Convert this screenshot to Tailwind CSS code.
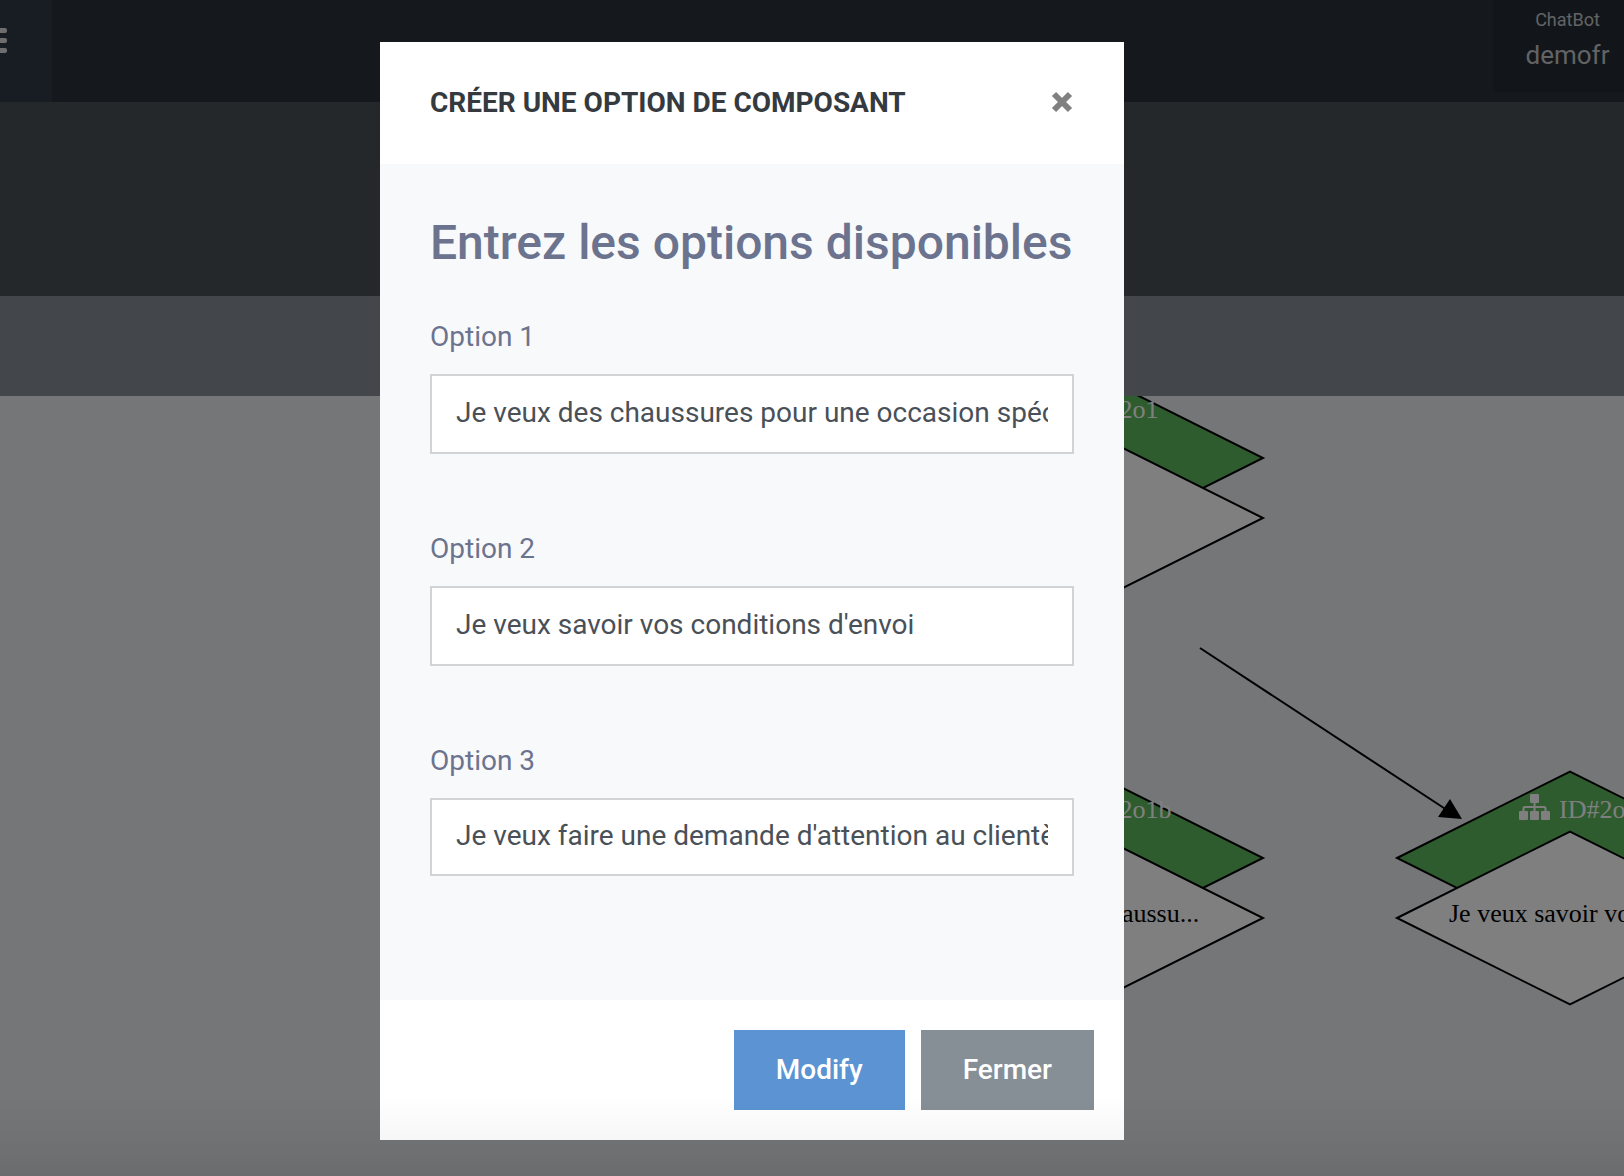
<!DOCTYPE html>
<html lang="fr">
<head>
    <meta charset="UTF-8">
    <meta name="viewport" content="width=device-width, initial-scale=1.0">
    <title>ChatBot - demofr</title>
    <script src="https://cdn.jsdelivr.net/npm/@tailwindcss/browser@4"></script>
</head>
<body class="font-['Roboto',sans-serif] text-[28px] bg-[#eaecf0]">
    <div class="flex flex-col h-screen overflow-hidden">
        <!-- Top bar -->
        <header class="flex justify-between items-start h-[102px] bg-[#2a323a]">
            <button type="button" aria-label="Menu" class="w-[52px] h-full pb-[22px] bg-[#303a48] border-r border-[#30383e]">
                <svg class="block w-2 h-[26px]" viewBox="0 0 8 26" fill="#dcdcdc">
                    <rect x="-22" y="1" width="29" height="5" rx="2" />
                    <rect x="-22" y="11" width="29" height="5" rx="2" />
                    <rect x="-22" y="21" width="29" height="5" rx="2" />
                </svg>
            </button>
            <div class="w-[131px] h-[92px] pt-2 pl-[18px] bg-[#242c34] text-[#c4c6c8] text-center">
                <p class="text-lg leading-6">ChatBot</p>
                <p class="mt-1 text-[26px] leading-[38px]">demofr</p>
            </div>
        </header>
        <div class="h-[194px] shrink-0 bg-[#485054]"></div>
        <div class="h-[100px] shrink-0 bg-[#868c96]"></div>

        <!-- Flow diagram -->
        <main class="flex-1 min-h-0">
            <svg class="block w-full h-full font-['Liberation_Serif',serif] text-[26px]">
                <defs>
                    <g id="node">
                        <path d="M-173 0 0-86.5 173 0 0 86.5z" fill="#5cb85c" stroke="#000" stroke-width="2" />
                        <path d="M-173 60 0-26.5 173 60 0 146.5z" fill="#fff" stroke="#000" stroke-width="2" />
                        <g transform="translate(-51 -64)" fill="#fff">
                            <rect x="11" y="0" width="9" height="9" rx="1" />
                            <rect x="0" y="17" width="9" height="9" rx="1" />
                            <rect x="11" y="17" width="9" height="9" rx="1" />
                            <rect x="22" y="17" width="9" height="9" rx="1" />
                            <path d="M15.500 8V18M4.500 18V14.500Q4.500 13 6 13H25Q26.500 13 26.500 14.500V18" fill="none" stroke="#fff" stroke-width="2" />
                        </g>
                    </g>
                </defs>
                <g transform="translate(1090 62)">
                    <use href="#node" />
                    <text x="-11" y="-40" fill="#fff">ID#2o1</text>
                </g>
                <g transform="translate(1090 462)">
                    <use href="#node" />
                    <text x="-11" y="-40" fill="#fff">ID#2o1b</text>
                    <text x="-119" y="64">Je veux des chaussu...</text>
                </g>
                <path d="M1200 252 1450 416" stroke="#000" stroke-width="2" />
                <path d="M1462 423 1450 403 1438 421z" />
                <g transform="translate(1570 462)">
                    <use href="#node" />
                    <text x="-11" y="-40" fill="#fff">ID#2o2b</text>
                    <text x="-121" y="64">Je veux savoir vos c...</text>
                </g>
            </svg>
        </main>
    </div>

    <!-- Modal -->
    <div class="fixed inset-0 flex justify-center items-start pt-[42px] pr-[120px] bg-black/50">
        <form role="dialog" aria-labelledby="modalTitle" class="w-full max-w-[744px] bg-white" onsubmit="return false;">
            <div class="flex justify-between items-center h-[122px] px-[50px]">
                <h5 id="modalTitle" class="font-bold leading-[42px] text-[#343a40]">CRÉER UNE OPTION DE COMPOSANT</h5>
                <button type="button" aria-label="Fermer la fenêtre" class="pb-0.5">
                    <svg class="block size-6" viewBox="0 0 24 24" stroke="#808080" stroke-width="6">
                        <path d="M4 4 20 20M20 4 4 20" />
                    </svg>
                </button>
            </div>
            <div class="px-[50px] pt-[50px] pb-[50px] bg-[#f8f9fb]">
                <h2 class="mb-[44px] text-5xl leading-[58px] font-medium whitespace-nowrap text-[#6c738e]">Entrez les options disponibles</h2>
                <div class="mb-[74px]">
                    <label for="option1" class="block mb-4 leading-[42px] text-[#6c738e]">Option 1</label>
                    <input type="text" id="option1" value="Je veux des chaussures pour une occasion spéciale" class="block w-full h-20 px-6 pb-1 bg-white border-2 border-[#d1d3d5] text-[#495057]" />
                </div>
                <div class="mb-[74px]">
                    <label for="option2" class="block mb-4 leading-[42px] text-[#6c738e]">Option 2</label>
                    <input type="text" id="option2" value="Je veux savoir vos conditions d'envoi" class="block w-full h-20 px-6 pb-1 bg-white border-2 border-[#d1d3d5] text-[#495057]" />
                </div>
                <div class="mb-[74px]">
                    <label for="option3" class="block mb-4 leading-[42px] text-[#6c738e]">Option 3</label>
                    <input type="text" id="option3" value="Je veux faire une demande d'attention au clientèle" class="block w-full h-[78px] px-6 pb-1 bg-white border-2 border-[#d1d3d5] text-[#495057]" />
                </div>
            </div>
            <div class="flex justify-end gap-4 px-[30px] py-[30px]">
                <button type="submit" class="h-20 px-[42px] bg-[#5b93d3] text-white font-medium">Modify</button>
                <button type="button" class="h-20 px-[42px] bg-[#868e96] text-white font-medium">Fermer</button>
            </div>
        </form>
    </div>

    <!-- Bottom shade -->
    <div class="fixed inset-x-0 bottom-0 h-20 bg-linear-to-t from-black/8 via-black/3 to-transparent pointer-events-none"></div>
</body>
</html>
